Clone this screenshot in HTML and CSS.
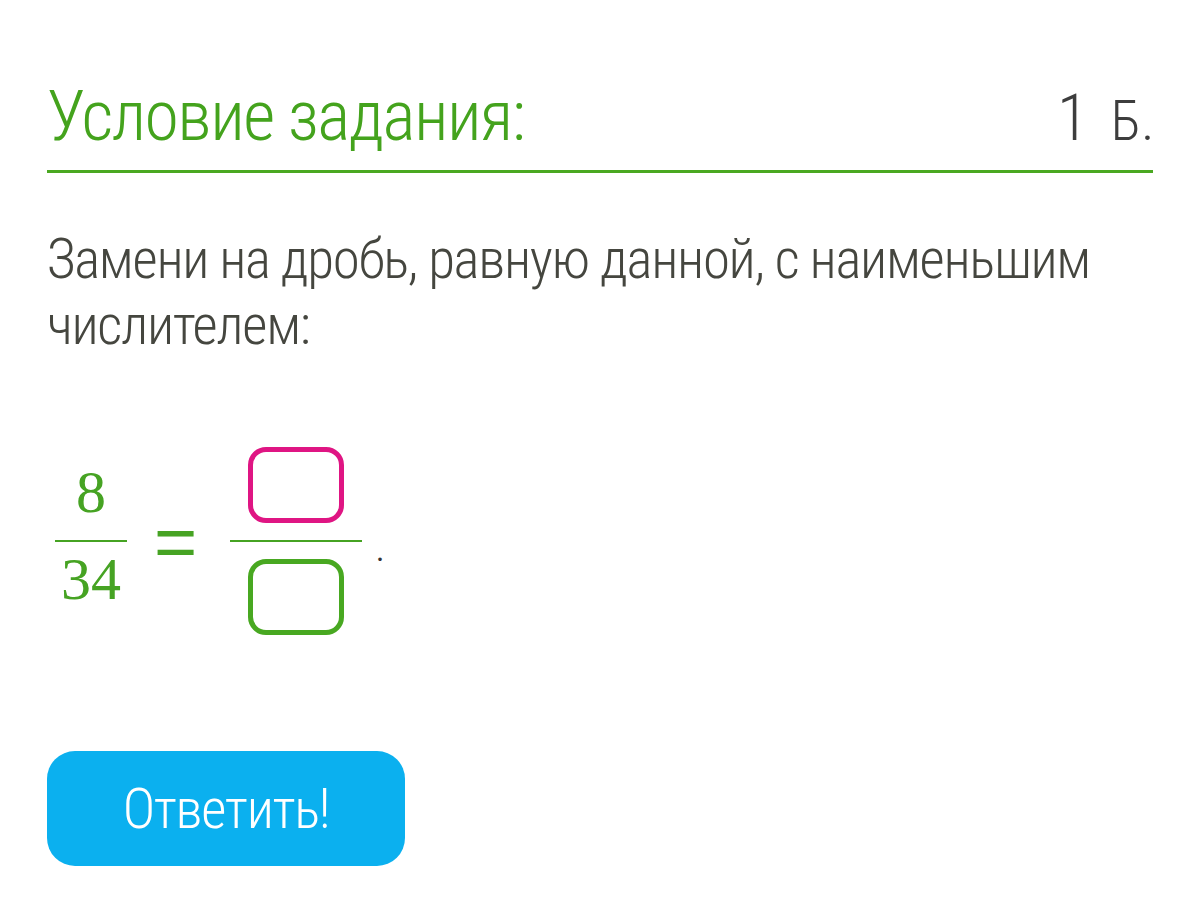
FILE: index.html
```html
<!DOCTYPE html>
<html lang="ru">

<head>
    <meta charset="UTF-8">
    <meta name="viewport" content="width=device-width, initial-scale=1.0">
    <title>Условие задания</title>
    <link rel="stylesheet" href="styles.css">
</head>

<body>

    <div class="task">
        <!-- Header -->
        <div class="task-header">
            <h2 class="task-title">Условие задания:</h2>
            <span class="task-points"><span class="points-value">1</span><span class="points-unit">Б.</span></span>
        </div>

        <p class="task-text">Замени на дробь, равную данной, с наименьшим числителем:</p>

        <!-- Fraction -->
        <div class="equation">
            <div class="fraction given">
                <span class="num">8</span>
                <span class="den">34</span>
            </div>
            <span class="equals">=</span>
            <div class="fraction answer">
                <span class="num"><input type="text" class="box box-top"></span>
                <span class="den"><input type="text" class="box box-bottom"></span>
            </div>
            <span class="dot">.</span>
        </div>

        <button class="submit-btn">Ответить!</button>
    </div>

</body>

</html>
```

FILE: styles.css
```css
/* Basic Reset */
* {
    margin: 0;
    padding: 0;
    box-sizing: border-box;
}

body {
    background-color: #fff;
    font-family: Roboto, 'Liberation Sans', Arial, sans-serif;
    font-weight: 300;
    font-stretch: condensed;
    color: #45463f;
}

.task {
    padding: 0 47px;
}

/* Header */
.task-header {
    display: flex;
    justify-content: space-between;
    align-items: baseline;
    padding-top: 74px;
    padding-bottom: 12px;
    border-bottom: 3px solid #4aa821;
}

.task-title {
    font-size: 70px;
    font-weight: 300;
    color: #44a31d;
    line-height: 84px;
    letter-spacing: -1.6px;
}

.task-points {
    color: #3d3d3d;
    margin-right: -2px;
}

.points-value {
    font-size: 65px;
}

.points-unit {
    font-size: 55px;
    margin-left: 22px;
    letter-spacing: 0.5px;
}

.task-text {
    margin-top: 53px;
    font-size: 55px;
    line-height: 66px;
    letter-spacing: -1.3px;
    color: #45463f;
}

/* Equation */
.equation {
    display: flex;
    align-items: center;
    margin-top: 89px;
    padding-left: 8px;
    color: #46a323;
    font-family: 'Liberation Serif', 'Times New Roman', serif;
    font-weight: 400;
    font-stretch: normal;
}

.fraction {
    display: flex;
    flex-direction: column;
    align-items: center;
}

.fraction .num,
.fraction .den {
    display: block;
    text-align: center;
}

.given {
    padding-bottom: 9px;
}

.given .num {
    font-size: 60px;
    line-height: 62px;
    width: 72px;
    border-bottom: 2px solid #46a323;
    padding-bottom: 17px;
}

.given .den {
    font-size: 60px;
    line-height: 66px;
    padding-top: 4px;
}

.equals {
    font-family: 'Liberation Sans', Arial, sans-serif;
    font-weight: 400;
    font-size: 74px;
    margin: 0 33px 0 27px;
}

.answer .num {
    width: 132px;
    border-bottom: 2px solid #46a323;
    padding-bottom: 17px;
}

.answer .den {
    padding-top: 17px;
}

.box {
    display: block;
    margin: 0 auto;
    width: 96px;
    height: 76px;
    border-radius: 18px;
    background: #fff;
    outline: none;
}

.box-top {
    border: 5px solid #df1583;
}

.box-bottom {
    border: 5px solid #48a821;
}

.dot {
    font-size: 30px;
    color: #333;
    margin-left: 14px;
    margin-top: 20px;
}

/* Button */
.submit-btn {
    display: block;
    margin-top: 116px;
    width: 358px;
    height: 115px;
    border: none;
    border-radius: 28px;
    background-color: #0bb0ef;
    color: #fff;
    font-family: Roboto, 'Liberation Sans', Arial, sans-serif;
    font-weight: 300;
    font-stretch: condensed;
    font-size: 55px;
    letter-spacing: -1.3px;
    cursor: pointer;
}
```
